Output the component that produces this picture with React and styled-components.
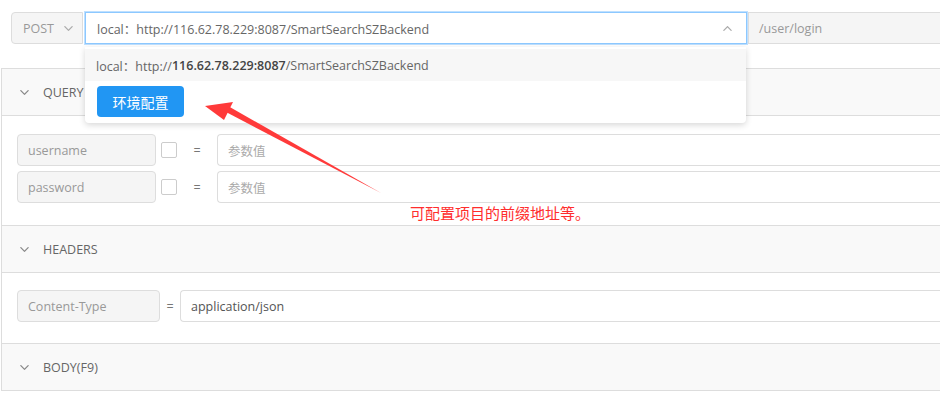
import React from "react";
import styled, { createGlobalStyle } from "styled-components";
import { IoIosArrowDown, IoIosArrowUp } from "react-icons/io";

const GlobalStyle = createGlobalStyle`
  html, body {
    margin: 0;
    padding: 0;
    background: #fff;
    overflow: hidden;
  }
  body {
    font-family: "Open Sans", "Noto Sans CJK SC", sans-serif;
    font-size: 12.5px;
    color: #666;
  }
`;

const Page = styled.div`
  position: relative;
  width: 940px;
  height: 402px;
  overflow: hidden;
`;

const TopBar = styled.div`
  display: flex;
  align-items: stretch;
  height: 32px;
  padding: 12px 0 0 11px;
`;

const MethodSelect = styled.div`
  display: flex;
  align-items: center;
  gap: 8px;
  width: 72px;
  box-sizing: border-box;
  padding-left: 11px;
  background: #f5f5f5;
  border: 1px solid #ddd;
  border-radius: 4px 0 0 4px;
  color: #999;
`;

const UrlSelect = styled.div`
  display: flex;
  align-items: center;
  justify-content: space-between;
  width: 662px;
  box-sizing: border-box;
  margin-left: 2px;
  padding: 0 12px 0 11px;
  border: 1px solid #8cc8ff;
  box-shadow: 0 0 0 1px #bfe0ff;
  color: #666;
  background: #fff;
`;

const PathInput = styled.div`
  display: flex;
  align-items: center;
  flex: 1;
  padding-left: 10px;
  margin-left: 1px;
  background: #f5f5f5;
  border: 1px solid #ddd;
  border-right: none;
  color: #999;
`;

const Dropdown = styled.div`
  position: absolute;
  top: 47px;
  left: 85px;
  width: 661px;
  padding: 2px 0 6px;
  background: #fff;
  border-radius: 0 0 4px 4px;
  box-shadow: 0 2px 6px rgba(0, 0, 0, 0.16);
  z-index: 5;
`;

const Option = styled.div`
  height: 32px;
  display: flex;
  align-items: center;
  padding-left: 11px;
  background: #f7f7f7;
  color: #666;
  b {
    color: #444;
    font-weight: 600;
  }
`;

const ConfigButton = styled.button`
  margin: 5px 0 0 12px;
  height: 31px;
  width: 87px;
  border: none;
  border-radius: 4px;
  background: #2196f3;
  color: #fff;
  font-family: "Noto Sans CJK SC", sans-serif;
  font-size: 14px;
`;

const Panel = styled.div`
  margin: 24px 0 0 1px;
  border-left: 1px solid #ddd;
  border-top: 1px solid #ddd;
`;

const SectionHeader = styled.div`
  display: flex;
  align-items: center;
  gap: 12px;
  height: 46px;
  padding-left: 16px;
  background: #f9f9f9;
  border-bottom: 1px solid #ddd;
  border-top: ${(p) => (p.$top ? "1px solid #ddd" : "none")};
  color: #666;
`;

const SectionBody = styled.div`
  display: flex;
  flex-direction: column;
  gap: 5px;
  padding: ${(p) => p.$pad};
`;

const Row = styled.div`
  display: flex;
  align-items: center;
  height: 32px;
`;

const KeyInput = styled.div`
  display: flex;
  align-items: center;
  width: ${(p) => p.$w}px;
  height: 32px;
  box-sizing: border-box;
  padding-left: 10px;
  background: #f5f5f5;
  border: 1px solid #ddd;
  border-radius: 4px;
  color: #999;
`;

const Check = styled.span`
  width: 16px;
  height: 16px;
  box-sizing: border-box;
  margin-left: 5px;
  border: 1px solid #ccc;
  border-radius: 2px;
  background: #fff;
`;

const Eq = styled.span`
  width: ${(p) => p.$w}px;
  text-align: center;
  color: #777;
`;

const ValueInput = styled.div`
  display: flex;
  align-items: center;
  flex: 1;
  height: 32px;
  box-sizing: border-box;
  padding-left: 10px;
  border: 1px solid #ddd;
  border-right: none;
  border-radius: 4px 0 0 4px;
  color: ${(p) => (p.$filled ? "#555" : "#aaa")};
`;

const Note = styled.div`
  position: absolute;
  left: 410px;
  top: 202px;
  color: #ff2d2d;
  font-family: "Noto Sans CJK SC", sans-serif;
  font-size: 15px;
`;

const Arrow = styled.svg`
  position: absolute;
  left: 0;
  top: 0;
  pointer-events: none;
  z-index: 6;
`;

const Section = ({ title, top, children, pad }) => (
  <>
    <SectionHeader $top={top}>
      <IoIosArrowDown size={13} color="#888" />
      <span>{title}</span>
    </SectionHeader>
    {children && <SectionBody $pad={pad}>{children}</SectionBody>}
  </>
);

export default function App() {
  return (
    <Page>
      <GlobalStyle />
      <TopBar>
        <MethodSelect>
          POST <IoIosArrowDown size={13} color="#aaa" />
        </MethodSelect>
        <UrlSelect>
          <span>local：http://116.62.78.229:8087/SmartSearchSZBackend</span>
          <IoIosArrowUp size={13} color="#aaa" />
        </UrlSelect>
        <PathInput>/user/login</PathInput>
      </TopBar>

      <Dropdown>
        <Option>
          local：http://<b>116.62.78.229:8087</b>/SmartSearchSZBackend
        </Option>
        <ConfigButton>环境配置</ConfigButton>
      </Dropdown>

      <Panel>
        <Section title="QUERY" pad="18px 0 22px 15px">
          <Row>
            <KeyInput $w={139}>username</KeyInput>
            <Check />
            <Eq $w={40}>=</Eq>
            <ValueInput>参数值</ValueInput>
          </Row>
          <Row>
            <KeyInput $w={139}>password</KeyInput>
            <Check />
            <Eq $w={40}>=</Eq>
            <ValueInput>参数值</ValueInput>
          </Row>
        </Section>
        <Section title="HEADERS" top pad="17px 0 21px 15px">
          <Row>
            <KeyInput $w={143}>Content-Type</KeyInput>
            <Eq $w={20}>=</Eq>
            <ValueInput $filled>application/json</ValueInput>
          </Row>
        </Section>
        <Section title="BODY(F9)" top />
      </Panel>

      <Arrow width="940" height="402" viewBox="0 0 940 402">
        <path d="M381 193 L226 112 L228 106 Z" fill="#ff3a3a" />
        <path d="M205 106 L233 102 L224 120 Z" fill="#ff3a3a" />
      </Arrow>
      <Note>可配置项目的前缀地址等。</Note>
    </Page>
  );
}
